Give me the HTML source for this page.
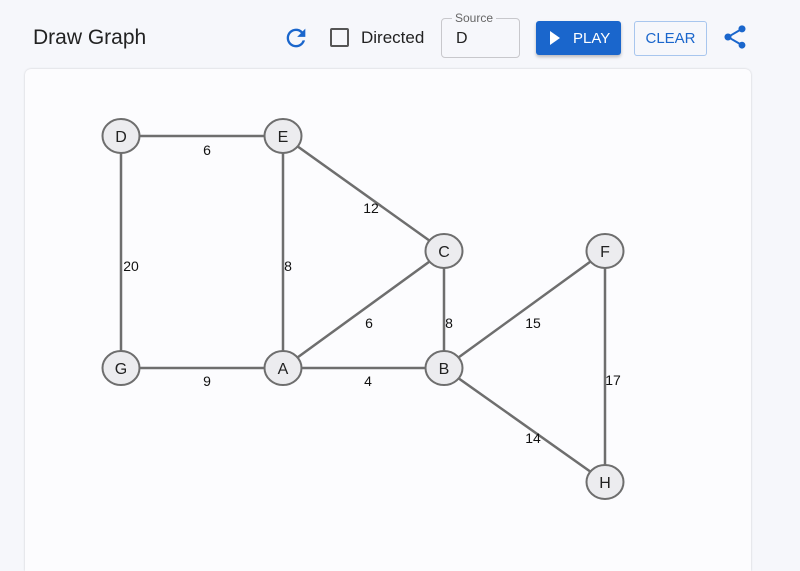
<!DOCTYPE html>
<html><head><meta charset="utf-8"><style>
html,body{margin:0;padding:0;width:800px;height:571px;overflow:hidden;background:#f6f7fb;font-family:"Liberation Sans",sans-serif;}
.t{position:absolute;left:33px;top:26px;font-size:21px;color:#222;}
.card{position:absolute;left:25px;top:69px;width:726px;height:502px;background:#fcfcfe;border-radius:6px 6px 0 0;box-shadow:0 0 2px rgba(0,0,0,.18);}
.cb{position:absolute;left:330px;top:28px;width:15px;height:15px;border:2px solid #555;border-radius:2px;}
.dl{position:absolute;left:361px;top:28px;font-size:17px;color:#222;}
.src{position:absolute;left:441px;top:18px;width:77px;height:38px;border:1px solid #c8c8cc;border-radius:4px;}
.src span.l{position:absolute;left:10px;top:-8px;background:#f6f7fb;padding:0 3px;font-size:12px;color:#666;}
.src span.v{position:absolute;left:14px;top:11px;font-size:16px;color:#222;}
.play{position:absolute;left:536px;top:21px;width:85px;height:34px;background:#1a66cc;border-radius:3px;box-shadow:0 2px 3px rgba(0,0,0,.25);color:#fff;font-size:15px;}
.clear{position:absolute;left:634px;top:21px;width:71px;height:33px;border:1px solid #a8c6ee;border-radius:3px;color:#1a66cc;font-size:15px;text-align:center;line-height:33px;}
</style></head><body>
<div class="t">Draw Graph</div>
<svg style="position:absolute;left:282px;top:24px" width="28" height="28" viewBox="0 0 24 24"><path fill="#1a66cc" d="M17.65 6.35A7.958 7.958 0 0012 4c-4.42 0-7.990 3.58-7.99 8s3.57 8 7.99 8c3.73 0 6.84-2.55 7.73-6h-2.08A5.99 5.99 0 0112 18c-3.31 0-6-2.69-6-6s2.69-6 6-6c1.66 0 3.14.69 4.22 1.78L13 11h7V4l-2.35 2.35z"/></svg>
<div class="cb"></div><div class="dl">Directed</div>
<div class="src"><span class="l">Source</span><span class="v">D</span></div>
<div class="play"><svg style="position:absolute;left:13px;top:10px" width="12" height="14"><path d="M1 0L11 7L1 14Z" fill="#fff"/></svg><span style="position:absolute;left:37px;top:9px">PLAY</span></div>
<div class="clear">CLEAR</div>
<svg style="position:absolute;left:721px;top:23px" width="28" height="28" viewBox="0 0 24 24"><path fill="#1a66cc" d="M18 16.08c-.76 0-1.44.3-1.96.77L8.91 12.7c.05-.23.09-.46.09-.7s-.04-.47-.09-.7l7.05-4.11c.54.5 1.25.81 2.040.81 1.66 0 3-1.34 3-3s-1.34-3-3-3-3 1.34-3 3c0 .24.04.47.09.7L8.04 9.81C7.5 9.31 6.79 9 6 9c-1.66 0-3 1.34-3 3s1.34 3 3 3c.79 0 1.5-.31 2.04-.81l7.12 4.16c-.05.21-.08.43-.08.65 0 1.61 1.31 2.92 2.92 2.92 1.61 0 2.92-1.31 2.92-2.92s-1.31-2.92-2.92-2.92z"/></svg>
<div class="card"></div>
<svg style="position:absolute;left:0;top:0" width="800" height="571" font-family="Liberation Sans, sans-serif">
<g stroke="#6e6e6e" stroke-width="2.5">
<line x1="121" y1="136" x2="283" y2="136"/><line x1="121" y1="136" x2="121" y2="368"/>
<line x1="283" y1="136" x2="283" y2="368"/><line x1="283" y1="136" x2="444" y2="251"/>
<line x1="121" y1="368" x2="444" y2="368"/><line x1="283" y1="368" x2="444" y2="251"/>
<line x1="444" y1="251" x2="444" y2="368"/><line x1="444" y1="368" x2="605" y2="251"/>
<line x1="444" y1="368" x2="605" y2="482"/><line x1="605" y1="251" x2="605" y2="482"/>
</g>
<g font-size="14" fill="#111" text-anchor="middle">
<text x="207" y="155">6</text><text x="131" y="271">20</text><text x="288" y="271">8</text>
<text x="371" y="213">12</text><text x="369" y="328">6</text><text x="449" y="328">8</text>
<text x="533" y="328">15</text><text x="207" y="386">9</text><text x="368" y="386">4</text>
<text x="613" y="385">17</text><text x="533" y="443">14</text>
</g>
<g fill="#ececef" stroke="#6e6e6e" stroke-width="2">
<ellipse cx="121" cy="136" rx="18.5" ry="17"/><ellipse cx="283" cy="136" rx="18.5" ry="17"/>
<ellipse cx="444" cy="251" rx="18.5" ry="17"/><ellipse cx="605" cy="251" rx="18.5" ry="17"/>
<ellipse cx="121" cy="368" rx="18.5" ry="17"/><ellipse cx="283" cy="368" rx="18.5" ry="17"/>
<ellipse cx="444" cy="368" rx="18.5" ry="17"/><ellipse cx="605" cy="482" rx="18.5" ry="17"/>
</g>
<g font-size="16" fill="#222" text-anchor="middle">
<text x="121" y="142">D</text><text x="283" y="142">E</text><text x="444" y="257">C</text><text x="605" y="257">F</text>
<text x="121" y="374">G</text><text x="283" y="374">A</text><text x="444" y="374">B</text><text x="605" y="488">H</text>
</g>
</svg>
</body></html>
